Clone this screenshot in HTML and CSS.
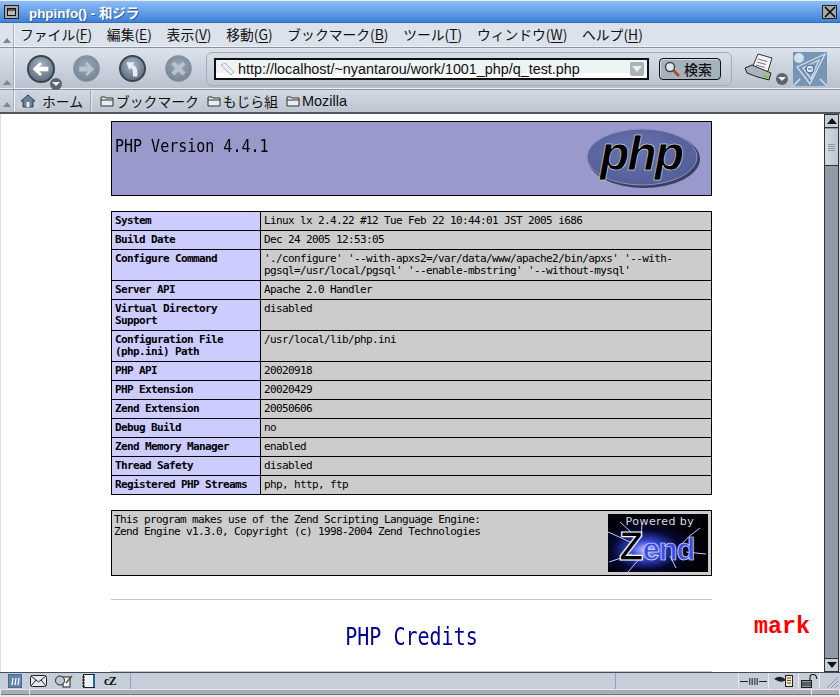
FILE: index.html
```html
<!DOCTYPE html>
<html lang="ja">
<head>
<meta charset="utf-8">
<title>phpinfo() - 和ジラ</title>
<link rel="stylesheet" href="styles.css">
</head>
<body>
<div class="window">
  <header class="titlebar">
    <span class="winbtn"><span class="winbtn-inner"></span></span>
    <span class="title">phpinfo() - 和ジラ</span>
    <span class="winbtn close"><svg width="12" height="12" viewBox="0 0 12 12"><path d="M1 1L11 11M11 1L1 11" stroke="#000" stroke-width="1.5"/></svg></span>
  </header>

  <nav class="bar menubar">
    <span class="grip"><i class="grip-tri"></i></span>
    <div class="menus">
      <span>ファイル(<u>F</u>)</span><span>編集(<u>E</u>)</span><span>表示(<u>V</u>)</span><span>移動(<u>G</u>)</span><span>ブックマーク(<u>B</u>)</span><span>ツール(<u>T</u>)</span><span>ウィンドウ(<u>W</u>)</span><span>ヘルプ(<u>H</u>)</span>
    </div>
  </nav>

  <div class="bar toolbar">
    <span class="grip"><i class="grip-tri"></i></span>
    <div class="navs">
      <span class="nav nav-on">
        <svg width="26" height="26" viewBox="0 0 26 26"><path d="M4 13L12 5.500L14 7.500L11 10.500H21V15.500H11L14 18.500L12 20.500Z" fill="#fff"/></svg>
        <i class="drop"></i>
      </span>
      <span class="nav"><svg width="26" height="26" viewBox="0 0 26 26"><path d="M21 13L13.500 5.500L11.500 7.500L14.500 10.500H5.500V15.500H14.500L11.500 18.500L13.500 20.500Z" fill="#b9c3ce"/></svg></span>
      <span class="nav nav-mid"><svg width="26" height="26" viewBox="0 0 26 26"><path d="M6 5.500H15L13.500 8.500Q18.500 10.500 18.500 16V21.500H13.500V16Q13.500 13 11.500 11.500L9.500 14Z" fill="#e9edf1"/></svg></span>
      <span class="nav"><svg width="27" height="27" viewBox="0 0 27 27"><path d="M7.500 7.500L19.500 19.500M19.500 7.500L7.500 19.500" stroke="#b9c3ce" stroke-width="4.500"/></svg></span>
    </div>
    <div class="urlgroup">
      <div class="urlbox">
        <svg class="tag" width="16" height="16" viewBox="0 0 16 16"><path d="M1 4L5 2L14 11L11 14Z" fill="#eef1f4" stroke="#aab3bd"/></svg>
        <span class="url">http://localhost/~nyantarou/work/1001_php/q_test.php</span>
        <span class="urlarrow"><i></i></span>
      </div>
      <span class="search">
        <svg width="18" height="18" viewBox="0 0 18 18"><circle cx="7" cy="7" r="4.500" fill="#dfe9f2" stroke="#444" stroke-width="1.500"/><path d="M10.500 10.500L16 16" stroke="#b3471c" stroke-width="2.500"/></svg>
        <span>検索</span>
      </span>
    </div>
    <span class="printer">
      <svg width="40" height="32" viewBox="0 0 40 32"><path d="M8 15L14 1L28 5L23 21Z" fill="#f2f4f6" stroke="#333"/><path d="M14 6L23 8.500M13 9L22 11.500M12 12L21 14.500" stroke="#777"/><path d="M1 15L8 12L27 20L25 27Q12 24 3 20Z" fill="#aab4bf" stroke="#222"/><path d="M20 23L25 24" stroke="#7c3" stroke-width="2.500"/></svg>
      <i class="drop"></i>
    </span>
    <span class="throbber">
      <svg width="34" height="34" viewBox="0 0 34 34"><rect width="34" height="34" fill="#7895b6"/><path d="M32 2L4 15L17 32Z M26 8L10 16L18 27Z" fill="none" stroke="#cfe0ee" stroke-width="1.300"/><path d="M0 34L7 27M27 27L34 34" stroke="#cfe0ee" stroke-width="1.500"/><circle cx="6" cy="6" r="5" fill="#cfe0ee"/><circle cx="17" cy="17" r="4" fill="#dce8f2" stroke="#3a5c80"/><path d="M15 17H19" stroke="#3a5c80"/></svg>
    </span>
  </div>

  <div class="bar personal">
    <span class="grip"><i class="grip-tri"></i></span>
    <span class="home">
      <span class="home-ico"><svg width="16" height="14" viewBox="0 0 16 14"><path d="M1 7L8 1L15 7H13V13H3V7Z" fill="#6b8298" stroke="#2c3e50"/><rect x="6.500" y="8" width="3" height="5" fill="#e8edf2"/></svg></span>
      <span>ホーム</span>
    </span>
    <div class="bookmarks">
      <span class="bm"><svg class="folder" width="15" height="12" viewBox="0 0 15 12"><path d="M1 2H5L6 3H13V11H1Z" fill="#e8edf2" stroke="#333"/><path d="M1 5H13" stroke="#333"/></svg>ブックマーク</span>
      <span class="bm"><svg class="folder" width="15" height="12" viewBox="0 0 15 12"><path d="M1 2H5L6 3H13V11H1Z" fill="#e8edf2" stroke="#333"/><path d="M1 5H13" stroke="#333"/></svg>もじら組</span>
      <span class="bm"><svg class="folder" width="15" height="12" viewBox="0 0 15 12"><path d="M1 2H5L6 3H13V11H1Z" fill="#e8edf2" stroke="#333"/><path d="M1 5H13" stroke="#333"/></svg>Mozilla</span>
    </div>
  </div>

  <main class="main">
    <div class="page">
      <div class="content">
        <div class="head">
          <h1><span>PHP Version 4.4.1</span></h1>
          <svg class="phplogo" width="114" height="60" viewBox="0 0 114 60" role="img" aria-label="PHP logo">
            <defs>
              <radialGradient id="phpg" cx="45%" cy="40%" r="70%"><stop offset="0" stop-color="#6a74b0"/><stop offset="1" stop-color="#4f5b93"/></radialGradient>
            </defs>
            <ellipse cx="58" cy="31" rx="56" ry="29" fill="#3a3f63"/>
            <ellipse cx="56" cy="29" rx="55" ry="28" fill="url(#phpg)" stroke="#8f93bd"/>
            <text x="55" y="42" class="phptext">php</text>
          </svg>
        </div>

        <table class="info">
          <tr><th>System</th><td>Linux lx 2.4.22 #12 Tue Feb 22 10:44:01 JST 2005 i686</td></tr>
          <tr><th>Build Date</th><td>Dec 24 2005 12:53:05</td></tr>
          <tr><th>Configure Command</th><td>'./configure' '--with-apxs2=/var/data/www/apache2/bin/apxs' '--with-<br>pgsql=/usr/local/pgsql' '--enable-mbstring' '--without-mysql'</td></tr>
          <tr><th>Server API</th><td>Apache 2.0 Handler</td></tr>
          <tr><th>Virtual Directory<br>Support</th><td>disabled</td></tr>
          <tr><th>Configuration File<br>(php.ini) Path</th><td>/usr/local/lib/php.ini</td></tr>
          <tr><th>PHP API</th><td>20020918</td></tr>
          <tr><th>PHP Extension</th><td>20020429</td></tr>
          <tr><th>Zend Extension</th><td>20050606</td></tr>
          <tr><th>Debug Build</th><td>no</td></tr>
          <tr><th>Zend Memory Manager</th><td>enabled</td></tr>
          <tr><th>Thread Safety</th><td>disabled</td></tr>
          <tr><th>Registered PHP Streams</th><td>php, http, ftp</td></tr>
        </table>

        <div class="zend">
          <p>This program makes use of the Zend Scripting Language Engine:<br>Zend Engine v1.3.0, Copyright (c) 1998-2004 Zend Technologies</p>
          <svg class="zendlogo" width="100" height="58" viewBox="0 0 100 58" role="img" aria-label="Powered by Zend">
            <defs>
              <radialGradient id="zg" cx="38%" cy="62%" r="52%"><stop offset="0" stop-color="#c6ceff"/><stop offset=".3" stop-color="#3444d8"/><stop offset=".65" stop-color="#060830"/><stop offset="1" stop-color="#000006"/></radialGradient>
              <filter id="zblur" x="-20%" y="-20%" width="140%" height="140%"><feGaussianBlur stdDeviation=".5"/></filter>
            </defs>
            <rect width="100" height="58" fill="url(#zg)"/>
            <path d="M0 18Q14 24 26 30M12 8Q24 18 30 26M34 10L33 24M1 48Q14 44 24 40M20 58L32 44M68 54L62 42M92 14Q80 22 72 32M98 40L78 38" stroke="#c0c8ff" stroke-width="1" fill="none" filter="url(#zblur)"/>
            <text x="52" y="11" class="zpow">Powered by</text>
            <text x="11" y="46" class="ztext"><tspan class="zz">Z</tspan><tspan class="zend-rest">end</tspan></text>
          </svg>
        </div>

        <hr class="rule rule-top">
        <h2><span>PHP Credits</span></h2>
        <hr class="rule rule-bottom">
      </div>
      <span class="mark">mark</span>
    </div>
    <aside class="scrollbar">
      <span class="sbtn"><i class="up"></i></span>
      <span class="thumb"><i></i><i></i><i></i><i></i></span>
      <span class="track"></span>
      <span class="sbtn"><i class="down"></i></span>
    </aside>
  </main>

  <footer class="status">
    <div class="comps">
      <svg width="14" height="14" viewBox="0 0 14 14"><rect width="14" height="14" fill="#5f86b0" stroke="#35506e"/><path d="M4 11L5 4M7 11L8 4M10 11L11 4" stroke="#fff" stroke-width="1.300"/></svg>
      <svg width="17" height="12" viewBox="0 0 17 12"><rect x=".5" y=".5" width="16" height="11" rx="2" fill="#e4e9ee" stroke="#222"/><path d="M1 1L8.500 7L16 1M1 11L6 5M16 11L11 5" stroke="#222" fill="none"/></svg>
      <svg width="19" height="13" viewBox="0 0 19 13"><rect x="8" y="2" width="7" height="10" fill="#f0f2f4" stroke="#222"/><circle cx="5" cy="5.500" r="4.500" fill="#b9c7d6" stroke="#222"/><path d="M17 1L11 8" stroke="#553" stroke-width="1.500"/></svg>
      <svg width="14" height="14" viewBox="0 0 14 14"><rect x="1.500" y=".5" width="11" height="13" fill="#eef1f4" stroke="#222"/><rect x="11" y="1" width="2" height="12" fill="#26a"/><path d="M0 3H3M0 6H3M0 9H3M0 12H3" stroke="#222"/></svg>
      <span class="cz">cZ</span>
    </div>
    <span class="status-fill"></span>
    <div class="indicators">
      <span class="ind ind-online"><svg width="27" height="9" viewBox="0 0 27 9"><path d="M0 4.500H8M19 4.500H27" stroke="#222"/><path d="M9 1H18V8H9Z" fill="#556"/><path d="M11 0V9M13.500 0V9M16 0V9" stroke="#c6cfd9"/></svg></span>
      <span class="ind ind-eye"><svg width="19" height="12" viewBox="0 0 19 12"><rect x="11.500" y=".5" width="7" height="11" fill="#f3e8b8" stroke="#222"/><path d="M13 3H17M13 5.500H17M13 8H17" stroke="#555"/><path d="M0 4Q6 -1 12 5Q8 8 4 6Z" fill="#222"/></svg></span>
      <span class="ind ind-lock"><svg width="17" height="14" viewBox="0 0 17 14"><rect x=".5" y="6.500" width="10" height="7" fill="#8a97a5" stroke="#222"/><path d="M1 9H10M1 11H10" stroke="#222"/><path d="M9 6V3Q9 .5 12 .5T15.500 3V5" fill="none" stroke="#222" stroke-width="1.200"/></svg></span>
      <span class="resize"><svg width="14" height="14" viewBox="0 0 14 14"><path d="M2 13L13 2M6 13L13 6M10 13L13 10" stroke="#8a97a5"/></svg></span>
    </div>
  </footer>
  <div class="progress"><span class="seg seg-a"></span><span class="seg seg-b"></span><span class="seg seg-c"></span></div>
</div>
</body>
</html>
```

FILE: styles.css
```css
* { box-sizing: border-box; }
html, body { margin: 0; padding: 0; height: 100%; overflow: hidden; background: #fff; }
.window {
  width: 840px; height: 697px; display: flex; flex-direction: column;
  font-family: "Noto Sans CJK JP", "Liberation Sans", sans-serif; color: #111;
}

/* title bar */
.titlebar {
  height: 23px; flex: none; display: flex; align-items: center; padding: 1px 3px 0 4px;
  background: linear-gradient(#8fbdf7, #3d82d9); border-top: 1px solid #e8eef6; border-bottom: 1px solid #3a6ba8;
}
.winbtn { width: 15px; height: 14px; border: 1px solid #222; background: #a9a9a9; display: flex; align-items: center; justify-content: center; flex: none; }
.winbtn-inner { width: 9px; height: 8px; background: #b9b9b9; border: 1px solid #111; box-shadow: inset 0 2px 0 #555; }
.title { margin-left: 10px; flex: 1; color: #fff; font: bold 13.400px "Liberation Sans", "Noto Sans CJK JP", sans-serif; text-shadow: 1px 1px 0 #2c5f9f; }
.close { background: #a6a6a6; }

/* bars */
.bar { display: flex; align-items: center; flex: none; border-bottom: 1px solid #8a94a0; box-shadow: inset 0 -1px 0 #eef1f5; }
.grip { width: 13px; height: 100%; flex: none; position: relative; border-right: 1px solid #aab2bd; margin-left: 1px; box-shadow: 1px 0 0 #eef1f5; }
.grip-tri { position: absolute; left: 2px; bottom: 4px; border: 4px solid transparent; border-top: 0; border-bottom: 5px solid #7b8794; }
.menubar { height: 25px; background: #dce2eb; }
.menus { display: flex; gap: 14.700px; margin: 0 0 2px 6px; font-size: 13.8px; line-height: 22px; white-space: nowrap; }
.menus u { text-underline-offset: 2px; }
.toolbar { height: 42px; background: linear-gradient(#dde3ec, #b7c1cd); }
.personal { height: 24px; background: linear-gradient(#d3dae3, #bcc5d0); font-size: 13.8px; border-bottom: 2px solid #4e5660; box-shadow: none; padding-bottom: 1px; }

/* nav buttons */
.navs { display: flex; align-items: center; gap: 19px; margin-left: 13px; width: 179px; flex: none; }
.nav {
  width: 27px; height: 27px; border-radius: 50%; flex: none; position: relative; display: flex; align-items: center; justify-content: center;
  background: radial-gradient(circle at 50% 40%, #9aa7b5, #6c7b8b); border: 1px solid #85929f;
}
.nav-on { width: 28px; height: 28px; background: radial-gradient(circle at 50% 35%, #a9b6c4, #4e5e70); border: 2px solid #3a4553; margin-right: -1px; }
.nav-mid { background: radial-gradient(circle at 50% 35%, #a9b6c4, #4e5e70); border: 2px solid #3a4553; }
.drop {
  position: absolute; width: 12px; height: 12px; border-radius: 50%; background: #5a6572; right: -9px; bottom: -9px;
  display: block;
}
.drop::after { content: ""; position: absolute; left: 2px; top: 4px; border: 4px solid transparent; border-bottom: 0; border-top: 4px solid #f0f3f6; }

/* url */
.urlgroup {
  margin-left: 0; width: 526px; height: 34px; flex: none; display: flex; align-items: center; gap: 10px; padding: 0 10px 0 7px;
  border: 1px solid #a3adb9; border-radius: 6px; background: linear-gradient(#d8dee7, #bcc6d2);
}
.urlbox {
  width: 435px; height: 22px; flex: none; display: flex; align-items: center; border: 2px solid #111; background: linear-gradient(#eef3f6 75%, #fff 75%);
  padding: 0 3px 0 4px;
}
.tag { flex: none; }
.url { flex: 1; margin-left: 2px; font: 14.350px "Liberation Sans", sans-serif; color: #111; white-space: nowrap; }
.urlarrow { width: 14px; height: 14px; background: #a9b1bb; border-radius: 2px; display: flex; align-items: center; justify-content: center; flex: none; }
.urlarrow i { border: 5px solid transparent; border-bottom: 0; border-top: 6px solid #eef1f4; }
.search {
  width: 62px; height: 22px; flex: none; display: flex; align-items: center; gap: 3px; padding-left: 3px; font-size: 14px; font-weight: 500;
  border: 1px solid #111; border-radius: 4px; background: #a6b1be; box-shadow: inset 1px 1px 0 #cfd6de;
}
.printer { width: 40px; height: 32px; margin-left: 12px; flex: none; position: relative; }
.printer .drop { right: -4px; bottom: 0; }
.throbber { width: 34px; height: 34px; margin-left: 9px; flex: none; }
.printer svg, .throbber svg { display: block; }

/* personal bar */
.home { display: flex; align-items: center; gap: 3px; width: 73px; margin-left: 3px; height: 100%; flex: none; white-space: nowrap; }
.home-ico { width: 22px; height: 17px; background: #c9d2dc; display: flex; align-items: center; justify-content: center; border-radius: 2px; }
.bookmarks { display: flex; gap: 8px; padding-left: 9px; height: 100%; align-items: center; border-left: 1px solid #99a3af; box-shadow: inset 1px 0 0 #e4e9ee; white-space: nowrap; }
.bm { display: flex; align-items: center; gap: 1px; }
.bm:last-child { font-family: "Liberation Sans", sans-serif; font-size: 14.500px; }
.folder { flex: none; }

/* content */
.main { flex: none; height: 558px; display: flex; background: #fff; border-left: 1px solid #ddd; border-right: 1px solid #ddd; }
.page { flex: 1; position: relative; overflow: hidden; padding-top: 7px; }
.content { width: 601px; margin-left: 110px; font: 11px/12px "DejaVu Sans Mono", "Liberation Mono", monospace; letter-spacing: -.62px; color: #000; }
.head { height: 75px; border: 1px solid #000; background: #9999cc; position: relative; padding: 14px 3px 0; }
h1 { margin: 0; font: 15px/20px "DejaVu Sans Mono", monospace; letter-spacing: 0; }
h1 span { display: inline-block; transform: scaleY(1.16); }
.phplogo { position: absolute; right: 11px; top: 6px; }
.phptext { font: italic bold 48px "Liberation Sans", sans-serif; letter-spacing: -2px; fill: #000; stroke: #fff; stroke-width: .5px; text-anchor: middle; }
.info { width: 601px; margin-top: 15px; border-collapse: collapse; table-layout: fixed; }
.info th, .info td { border: 1px solid #000; padding: 3px 2px 3px 3px; text-align: left; vertical-align: top; white-space: nowrap; }
.info th { width: 149px; background: #ccccff; font-weight: bold; }
.info td { background: #cccccc; }
.zend { margin-top: 15px; height: 66px; border: 1px solid #000; background: #cccccc; display: flex; justify-content: space-between; padding: 3px 3px 3px 2px; }
.zend p { margin: 0; white-space: nowrap; }
.zendlogo { flex: none; }
.zpow { font: 11px "DejaVu Sans", sans-serif; letter-spacing: .5px; fill: #d8dce8; text-anchor: middle; }
.ztext { font: bold 27px "Liberation Sans", sans-serif; letter-spacing: -1px; }
.zz { font-size: 40px; fill: #000; stroke: #fff; stroke-width: 1.200px; }
.zend-rest { fill: #3a4ce8; stroke: #e8ecff; stroke-width: .7px; font-size: 31px; font-weight: 700; }
.rule { border: 0; height: 1px; background: #c8c8c8; margin: 0; }
.rule-top { margin-top: 23px; }
h2 { margin: 0; height: 71px; font: 20px/73px "DejaVu Sans Mono", monospace; letter-spacing: 0; color: #000099; text-align: center; }
h2 span { display: inline-block; transform: scaleY(1.25); }
.mark { position: absolute; left: 753px; top: 500px; font: bold 23.300px/26px "Liberation Mono", monospace; color: #ff0000; }

/* scrollbar */
.scrollbar { width: 15px; flex: none; display: flex; flex-direction: column; background: #8f9aa6; border: 1px solid #333; }
.sbtn { height: 13px; flex: none; background: #c6cfd9; display: flex; align-items: center; justify-content: center; border-bottom: 1px solid #333; }
.sbtn:last-child { border-bottom: 0; border-top: 1px solid #333; }
.up { border: 5px solid transparent; border-top: 0; border-bottom: 6px solid #111; }
.down { border: 5px solid transparent; border-bottom: 0; border-top: 6px solid #111; }
.thumb { height: 37px; flex: none; background: linear-gradient(90deg, #d3dae2, #bcc6d1); border-bottom: 1px solid #333; display: flex; flex-direction: column; gap: 1px; align-items: center; justify-content: center; margin-top: 1px; }
.thumb i { width: 7px; height: 1px; background: #8e99a6; display: block; }
.track { flex: 1; }

/* status */
.status { height: 17px; flex: none; display: flex; align-items: center; background: #c6cfd9; border-top: 1px solid #444c56; }
.comps { display: flex; align-items: center; gap: 8px; width: 131px; padding-left: 8px; height: 100%; border-right: 1px solid #98a2ae; flex: none; }
.comps svg { flex: none; }
.cz { font: bold 12px "Liberation Serif", serif; letter-spacing: -.5px; }
.status-fill { width: 485px; height: 100%; border-right: 1px solid #98a2ae; flex: none; }
.indicators { display: flex; flex: 1; height: 100%; justify-content: flex-end; }
.ind { display: flex; align-items: center; justify-content: center; height: 100%; border-left: 1px solid #e8ecf0; }
.ind-online { width: 30px; }
.ind-eye { width: 30px; }
.ind-lock { width: 21px; }
.resize { width: 21px; display: flex; align-items: flex-end; justify-content: flex-end; padding-right: 1px; border-left: 1px solid #e8ecf0; }

.progress { flex: 1; display: flex; background: #e4e8ec; padding: 1px 1px 2px; gap: 1px; }
.seg { background: #a9aeb4; border-bottom: 1px solid #777; height: 5px; }
.seg-a { width: 28px; }
.seg-b { flex: 1; }
.seg-c { width: 27px; }
```
